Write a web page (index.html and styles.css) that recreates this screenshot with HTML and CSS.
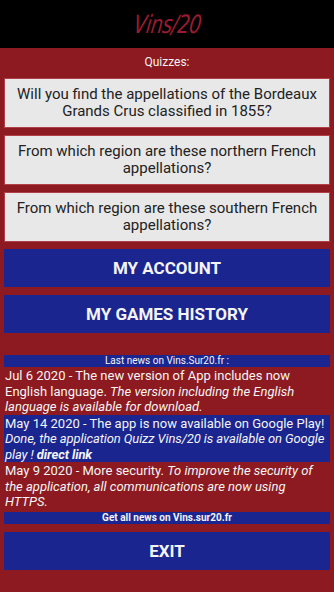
FILE: index.html
```html
<!DOCTYPE html>
<html lang="en">
<head>
    <meta charset="UTF-8">
    <meta name="viewport" content="width=device-width, initial-scale=1.0">
    <title>Vins/20</title>
    <link rel="stylesheet" href="styles.css">
</head>
<body>
    <div class="header">
        <span class="logo">Vins/20</span>
    </div>

    <div class="main">
        <div class="quizTitle">Quizzes:</div>

        <div class="quiz">Will you find the appellations of the Bordeaux Grands Crus classified in 1855?</div>
        <div class="quiz">From which region are these northern French appellations?</div>
        <div class="quiz">From which region are these southern French appellations?</div>

        <button class="bigBtn first">MY ACCOUNT</button>
        <button class="bigBtn">MY GAMES HISTORY</button>

        <div class="news">
            <div class="newsBar">Last news on Vins.Sur20.fr :</div>
            <div class="newsItem">Jul 6 2020 - The new version of App includes now English language. <i>The version including the English language is available for download.</i></div>
            <div class="newsItem blue">May 14 2020 - The app is now available on Google Play! <i>Done, the application Quizz Vins/20 is available on Google play ! <b>direct link</b></i></div>
            <div class="newsItem">May 9 2020 - More security. <i>To improve the security of the application, all communications are now using HTTPS.</i></div>
            <div class="newsBar bold">Get all news on Vins.sur20.fr</div>
        </div>

        <button class="bigBtn exit">EXIT</button>
    </div>
</body>
</html>
```

FILE: styles.css
```css
*{
    margin: 0px;
    box-sizing: border-box;
}
body{
    width: 334px;
    height: 592px;
    background-color: #8c1a20;
    font-family: Roboto, "Liberation Sans", sans-serif;
    overflow: hidden;
}
.header{
    height: 48px;
    background-color: #000;
    display: flex;
    justify-content: center;
    align-items: center;
}
.logo{
    font-family: "Liberation Sans Narrow", "DejaVu Sans Condensed", sans-serif;
    font-style: italic;
    font-size: 21px;
    color: #9a1c32;
    letter-spacing: -0.5px;
    transform: skewX(-8deg) scaleY(1.2);
    margin-top: 2px;
}
.main{
    padding: 0px 4px;
}
.quizTitle{
    color: #f2f2f2;
    font-size: 12px;
    text-align: center;
    height: 30px;
    line-height: 28px;
}
.quiz{
    background-color: #e8e8e8;
    color: #222;
    font-size: 15px;
    line-height: 17px;
    text-align: center;
    height: 50px;
    margin-bottom: 7px;
    padding: 0px 8px;
    display: flex;
    align-items: center;
    justify-content: center;
    border: 1px solid #b04048;
}
.bigBtn{
    display: block;
    width: 100%;
    height: 38px;
    border: none;
    background-color: #1a2590;
    color: #f4f4f4;
    font-family: Roboto, "Liberation Sans", sans-serif;
    font-weight: bold;
    font-size: 17px;
    margin-bottom: 8px;
}
.bigBtn.first{
    margin-top: 1px;
}
.news{
    margin-top: 22px;
    color: #f4f4f4;
}
.newsBar{
    background-color: #1a2590;
    font-size: 10px;
    text-align: center;
    height: 12px;
    line-height: 12px;
}
.newsBar.bold{
    font-weight: bold;
    margin-top: 2px;
}
.newsItem{
    font-size: 13px;
    line-height: 15.5px;
    padding: 1px 4px 0px 1px;
}
.newsItem.blue{
    background-color: #1a2590;
    padding-right: 0px;
}
.newsItem.blue i{
    letter-spacing: -0.1px;
}
.exit{
    margin-top: 8px;
}
```
